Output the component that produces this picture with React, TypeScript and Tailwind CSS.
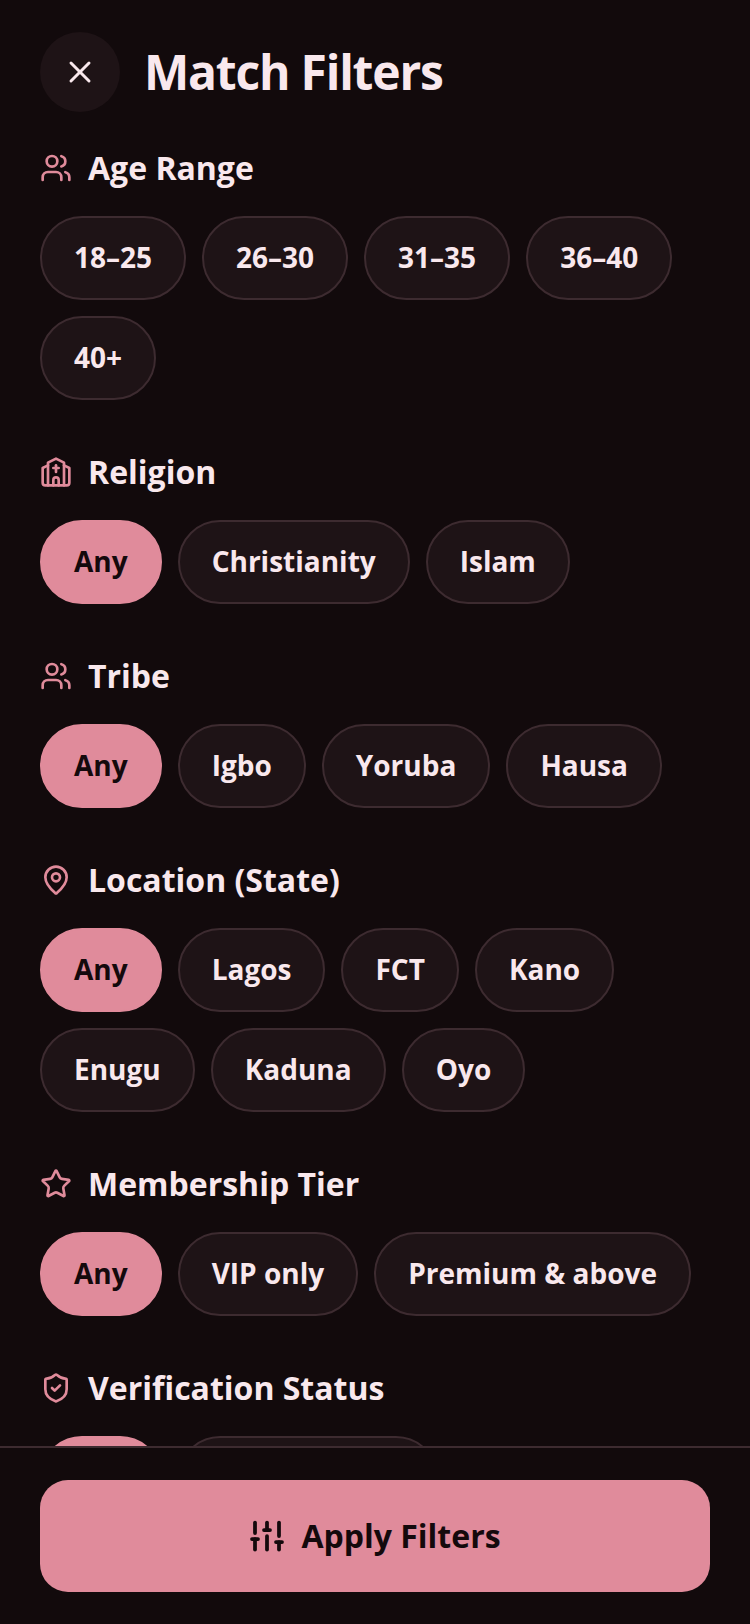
import React from 'react';
import { MapPin, ShieldCheck, Star, Users, X } from 'lucide-react';

type IconProps = { size?: number; className?: string; strokeWidth?: number };

function Svg({ size = 24, className, strokeWidth = 2, children }: IconProps & { children: React.ReactNode }) {
  return (
    <svg
      width={size}
      height={size}
      viewBox="0 0 24 24"
      fill="none"
      stroke="currentColor"
      strokeWidth={strokeWidth}
      strokeLinecap="round"
      strokeLinejoin="round"
      className={className}
    >
      {children}
    </svg>
  );
}

function ChurchGlyph(props: IconProps) {
  return (
    <Svg {...props}>
      <path d="m18 7 4 2v11a2 2 0 0 1-2 2H4a2 2 0 0 1-2-2V9l4-2" />
      <path d="M14 22v-4a2 2 0 0 0-2-2a2 2 0 0 0-2 2v4" />
      <path d="M18 22V5l-6-3-6 3v17" />
      <path d="M12 7v5" />
      <path d="M10 9h4" />
    </Svg>
  );
}

function SlidersGlyph(props: IconProps) {
  return (
    <Svg {...props}>
      <path d="M4 21v-7" />
      <path d="M4 10V3" />
      <path d="M12 21v-9" />
      <path d="M12 8V3" />
      <path d="M20 21v-5" />
      <path d="M20 12V3" />
      <path d="M2 14h4" />
      <path d="M10 8h4" />
      <path d="M18 16h4" />
    </Svg>
  );
}

interface FilterSection {
  title: string;
  icon: React.ComponentType<IconProps>;
  options: string[];
  selected?: string;
}

const sections: FilterSection[] = [
  { title: 'Age Range', icon: Users, options: ['18–25', '26–30', '31–35', '36–40', '40+'] },
  { title: 'Religion', icon: ChurchGlyph, options: ['Any', 'Christianity', 'Islam'], selected: 'Any' },
  { title: 'Tribe', icon: Users, options: ['Any', 'Igbo', 'Yoruba', 'Hausa'], selected: 'Any' },
  {
    title: 'Location (State)',
    icon: MapPin,
    options: ['Any', 'Lagos', 'FCT', 'Kano', 'Enugu', 'Kaduna', 'Oyo'],
    selected: 'Any',
  },
  { title: 'Membership Tier', icon: Star, options: ['Any', 'VIP only', 'Premium & above'], selected: 'Any' },
  { title: 'Verification Status', icon: ShieldCheck, options: ['Any', 'Verified users'], selected: 'Any' },
];

function Chip({ label, active }: { label: string; active: boolean }) {
  return (
    <button
      className={`h-[84px] rounded-full px-8 pb-0.5 text-[28px] font-bold border-2 ${
        active
          ? 'bg-[#e08b9b] border-[#e08b9b] text-[#14090c]'
          : 'bg-[#1e1316] border-[#3d2b30] text-[#f9e8ed]'
      }`}
    >
      {label}
    </button>
  );
}

export default function App() {
  return (
    <div className="h-[1624px] w-[750px] flex flex-col overflow-hidden bg-[#120a0c] font-['Open_Sans',sans-serif]">
      <div className="flex-1 min-h-0 overflow-hidden px-10 pt-8">
        <div className="flex items-center gap-6 mb-8">
          <button className="w-20 h-20 rounded-full bg-[#1e1316] flex items-center justify-center text-[#f9e8ed]">
            <X size={36} strokeWidth={2} />
          </button>
          <h1 className="text-[48px] font-bold tracking-tight text-[#f9e8ed]">Match Filters</h1>
        </div>

        <div className="flex flex-col gap-12">
          {sections.map((section) => {
            const Icon = section.icon;
            return (
              <section key={section.title}>
                <div className="flex items-center gap-4 h-[48px] mb-6">
                  <Icon size={32} strokeWidth={2} className="text-[#e08b9b]" />
                  <h2 className="text-[32px] font-bold text-[#f9e8ed]">{section.title}</h2>
                </div>
                <div className="flex flex-wrap gap-4">
                  {section.options.map((option) => (
                    <Chip key={option} label={option} active={option === section.selected} />
                  ))}
                </div>
              </section>
            );
          })}
        </div>
      </div>

      <div className="border-t-2 border-[#3d2b30] bg-[#120a0c] px-10 pt-8 pb-8">
        <button className="h-[112px] w-full rounded-[28px] bg-[#e08b9b] flex items-center justify-center gap-4 text-[#14090c]">
          <SlidersGlyph size={36} strokeWidth={2.5} />
          <span className="text-[32px] font-bold">Apply Filters</span>
        </button>
      </div>
    </div>
  );
}
